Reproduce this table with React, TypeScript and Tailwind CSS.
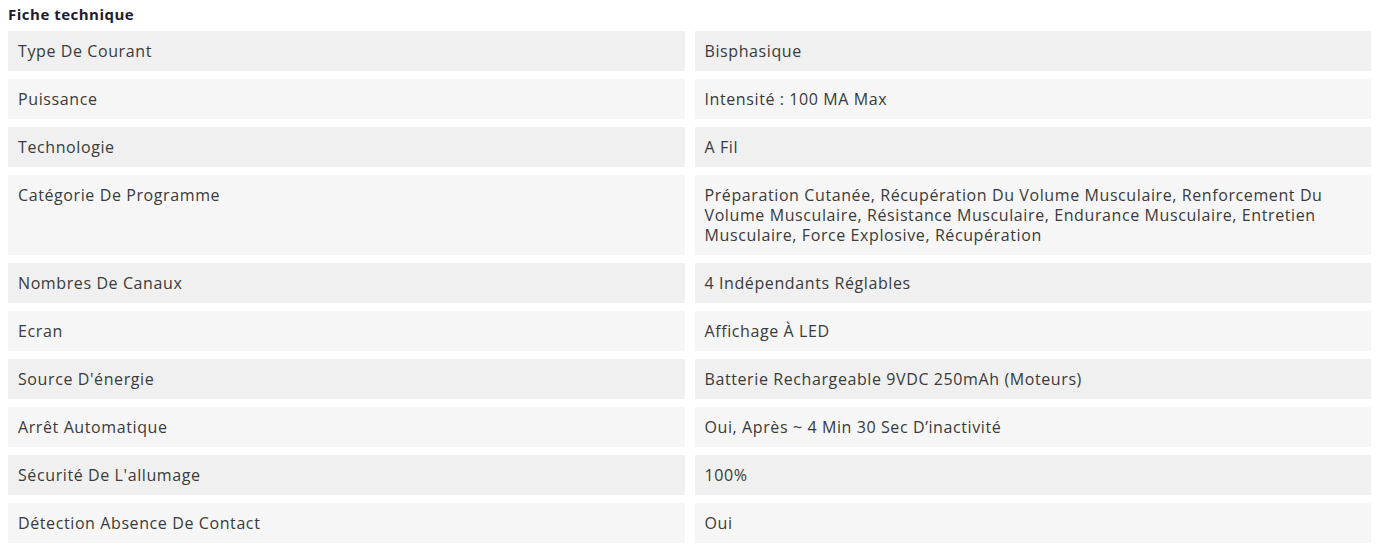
import React from 'react';

const specs: [string, string][] = [
  ['Type De Courant', 'Bisphasique'],
  ['Puissance', 'Intensité : 100 MA Max'],
  ['Technologie', 'A Fil'],
  [
    'Catégorie De Programme',
    'Préparation Cutanée, Récupération Du Volume Musculaire, Renforcement Du Volume Musculaire, Résistance Musculaire, Endurance Musculaire, Entretien Musculaire, Force Explosive, Récupération',
  ],
  ['Nombres De Canaux', '4 Indépendants Réglables'],
  ['Ecran', 'Affichage À LED'],
  ["Source D'énergie", 'Batterie Rechargeable 9VDC 250mAh (Moteurs)'],
  ['Arrêt Automatique', 'Oui, Après ~ 4 Min 30 Sec D’inactivité'],
  ["Sécurité De L'allumage", '100%'],
  ['Détection Absence De Contact', 'Oui'],
];

export default function App() {
  return (
    <div className="bg-white w-[1382px] h-[554px] pl-2 pt-[4px] font-['Open_Sans',sans-serif] text-[#3a3a3a]">
      <h3 className="text-[15px] leading-[20px] font-bold tracking-[0.5px] text-[#1d1d2b]">Fiche technique</h3>
      <div className="mt-[7px] w-[1363px] grid grid-cols-2 gap-x-[10px] gap-y-2">
        {specs.map(([label, value], i) => {
          const bg = i % 2 === 0 ? 'bg-[#f0f0f0]' : 'bg-[#f6f6f6]';
          return (
            <React.Fragment key={label}>
              <div className={`${bg} px-[10px] py-[10px] text-[16px] leading-[20px] tracking-[0.6px]`}>{label}</div>
              <div className={`${bg} px-[10px] py-[10px] text-[16px] leading-[20px] tracking-[0.6px]`}>{value}</div>
            </React.Fragment>
          );
        })}
      </div>
    </div>
  );
}
